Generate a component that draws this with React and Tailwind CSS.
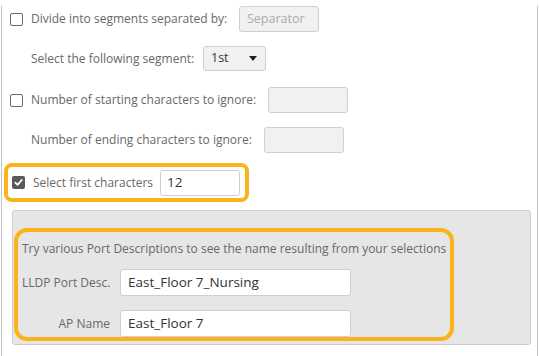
import React from "react";

function Box({ checked }) {
  if (checked) {
    return (
      <span className="flex h-[13px] w-[13px] shrink-0 items-center justify-center rounded-[2px] bg-[#5a5a5a]">
        <svg width="9" height="9" viewBox="0 0 10 10">
          <path d="M1.5 5.2 L4 7.6 L8.6 2.2" fill="none" stroke="#fff" strokeWidth="2" strokeLinecap="round" strokeLinejoin="round" />
        </svg>
      </span>
    );
  }
  return <span className="block h-[13px] w-[13px] shrink-0 rounded-[2px] border border-[#6a6a6a] bg-white" />;
}

function GrayInput({ w, text, placeholder }) {
  return (
    <div
      className={`flex h-[26px] shrink-0 items-center rounded-[3px] border border-[#cfcfcf] bg-[#f1f1f1] px-[7px] text-[12.5px] ${placeholder ? "text-[#aaaaaa]" : "text-[#333]"}`}
      style={{ width: w }}
    >
      {text}
    </div>
  );
}

export default function App() {
  return (
    <div className="h-[356px] w-[539px] bg-white text-[12px] text-[#686868]" style={{ fontFamily: '"Open Sans", "Noto Sans", sans-serif' }}>
      <div className="ml-px h-[354px] w-[537px] border-x border-b border-[#c4c4c4] whitespace-nowrap">
        {/* Row 1 */}
        <div className="mt-[6px] flex h-[26px] items-center">
          <div className="ml-[8px]"><Box /></div>
          <span className="ml-[8px] w-[208px] shrink-0">Divide into segments separated by:</span>
          <GrayInput w={80} text="Separator" placeholder />
        </div>
        {/* Row 2 */}
        <div className="mt-[14px] flex h-[25px] items-center">
          <span className="ml-[29px] w-[172px] shrink-0">Select the following segment:</span>
          <div className="flex h-[25px] w-[63px] shrink-0 items-center justify-between rounded-[3px] border border-[#cfcfcf] bg-[#f1f1f1] pl-[7px] pr-[8px] text-[12.5px] text-[#333]">
            <span>1st</span>
            <svg width="8" height="5" viewBox="0 0 8 5"><path d="M0 0 H8 L4 5 Z" fill="#222" /></svg>
          </div>
        </div>
        {/* Row 3 */}
        <div className="mt-[16px] flex h-[26px] items-center">
          <div className="ml-[8px]"><Box /></div>
          <span className="ml-[8px] w-[237px] shrink-0">Number of starting characters to ignore:</span>
          <GrayInput w={80} text="" />
        </div>
        {/* Row 4 */}
        <div className="mt-[14px] flex h-[26px] items-center">
          <span className="ml-[29px] w-[233px] shrink-0">Number of ending characters to ignore:</span>
          <GrayInput w={80} text="" />
        </div>
        {/* Row 5 highlighted */}
        <div className="ml-[2px] mt-[10px] flex h-[39px] w-[245px] items-center rounded-[8px] border-[4px] border-[#fbb31b]">
          <div className="ml-[4px]"><Box checked /></div>
          <span className="ml-[8px] w-[127px] shrink-0">Select first characters</span>
          <div className="flex h-[26px] w-[80px] shrink-0 items-center rounded-[3px] border border-[#cfcfcf] bg-white px-[6px] text-[13.5px] text-[#333]">12</div>
        </div>
        {/* Panel */}
        <div className="ml-[10px] mt-[8px] h-[135px] w-[519px] rounded-[3px] border border-[#cdcdcd] bg-[#e6e6e6] pt-[17px]">
          <div className="ml-px h-[113px] w-[440px] rounded-[13px] border-[4px] border-[#fbb31b] pl-[4px] pt-[6px]">
            <div className="h-[21px] leading-[21px]">Try various Port Descriptions to see the name resulting from your selections</div>
            <div className="mt-[10px] flex h-[27px] items-center">
              <span className="w-[88px] shrink-0 text-right">LLDP Port Desc.</span>
              <div className="ml-[10px] flex h-[27px] w-[231px] shrink-0 items-center rounded-[3px] border border-[#cfcfcf] bg-white px-[7px] text-[13.5px] text-[#333]">East_Floor 7_Nursing</div>
            </div>
            <div className="mt-[14px] flex h-[27px] items-center">
              <span className="w-[88px] shrink-0 text-right">AP Name</span>
              <div className="ml-[10px] flex h-[27px] w-[231px] shrink-0 items-center rounded-[3px] border border-[#cfcfcf] bg-white px-[7px] text-[13.5px] text-[#333]">East_Floor 7</div>
            </div>
          </div>
        </div>
      </div>
    </div>
  );
}
